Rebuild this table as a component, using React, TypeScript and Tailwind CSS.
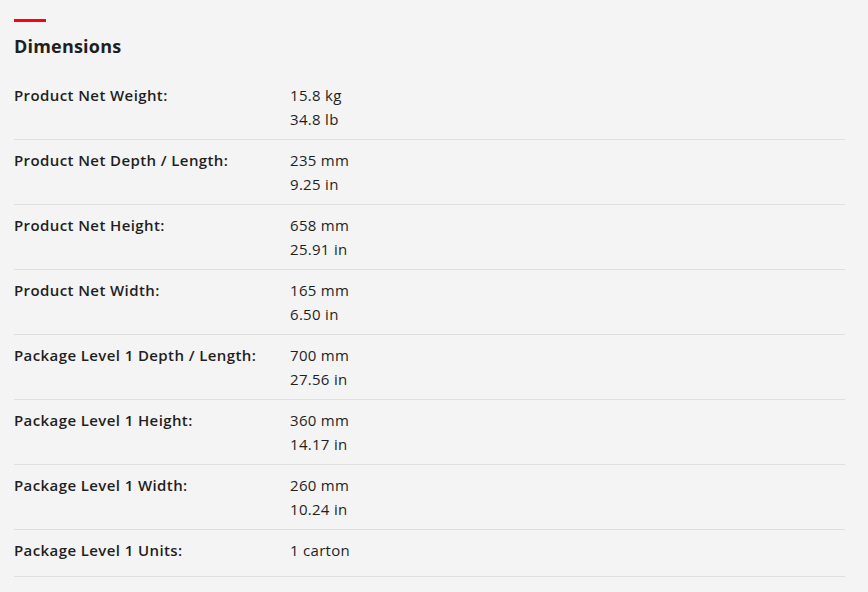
import React from "react";

const rows: { label: string; values: string[] }[] = [
  { label: "Product Net Weight:", values: ["15.8 kg", "34.8 lb"] },
  { label: "Product Net Depth / Length:", values: ["235 mm", "9.25 in"] },
  { label: "Product Net Height:", values: ["658 mm", "25.91 in"] },
  { label: "Product Net Width:", values: ["165 mm", "6.50 in"] },
  { label: "Package Level 1 Depth / Length:", values: ["700 mm", "27.56 in"] },
  { label: "Package Level 1 Height:", values: ["360 mm", "14.17 in"] },
  { label: "Package Level 1 Width:", values: ["260 mm", "10.24 in"] },
  { label: "Package Level 1 Units:", values: ["1 carton"] },
];

export default function App() {
  return (
    <div
      className="w-[868px] h-[592px] bg-[#f4f4f4] text-[#1f1f1f] overflow-hidden"
      style={{ fontFamily: "'Open Sans', sans-serif" }}
    >
      <div className="pl-[14px] w-[845px] pt-[19px]">
        <div className="w-[32px] h-[3px] bg-[#ff000f]" />
        <h2 className="mt-[12px] text-[18px] leading-[24px] font-bold tracking-[0.2px]">Dimensions</h2>
        <div className="mt-[17px]">
          {rows.map((r, i) => (
            <div
              key={i}
              className={`flex border-b border-[#dfdfdf] pt-[8px] ${i === rows.length - 1 ? "pb-[14px]" : "pb-[8px]"}`}
            >
              <div className="w-[276px] text-[15px] leading-[24px] font-semibold tracking-[0.4px]">{r.label}</div>
              <div className="text-[15px] leading-[24px] tracking-[0.3px]">
                {r.values.map((v, j) => (
                  <div key={j}>{v}</div>
                ))}
              </div>
            </div>
          ))}
        </div>
      </div>
    </div>
  );
}
